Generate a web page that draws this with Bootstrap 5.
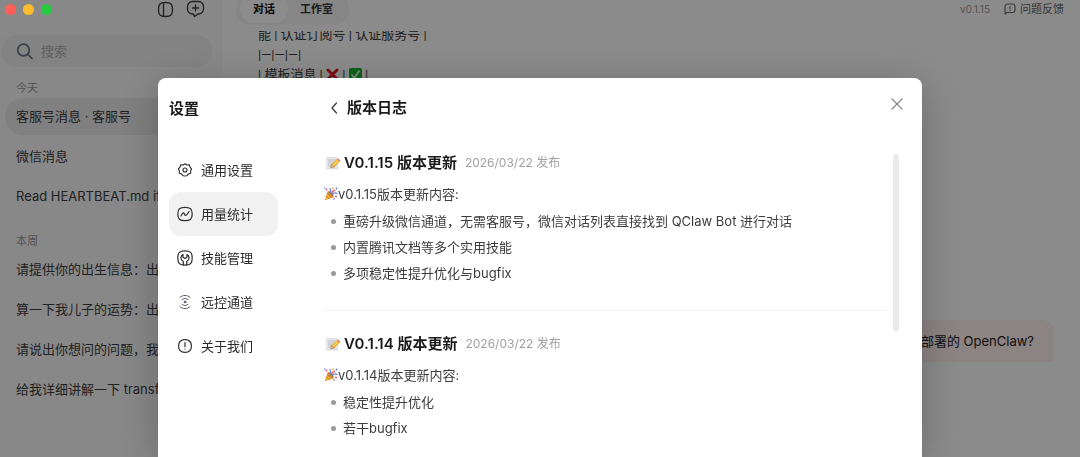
<!DOCTYPE html>
<html lang="zh-CN">
<head>
<meta charset="utf-8">
<meta name="viewport" content="width=device-width, initial-scale=1">
<title>QClaw 设置</title>
<link href="https://cdn.jsdelivr.net/npm/bootstrap@5.3.0/dist/css/bootstrap.min.css" rel="stylesheet">
<style>
  body { font-family: Inter, "Noto Sans CJK SC", sans-serif; font-size: 13px; line-height: 20px; color: #3c3c3c; background: #fdfdfd; }
  svg { display: block; flex: none; fill: none; stroke: currentColor; stroke-linecap: round; stroke-linejoin: round; }
  button { font: inherit; color: inherit; background: none; border: 0; padding: 0; }

  /* window chrome */
  .window-dots { z-index: 1060; top: 4px; left: 5px; gap: 7px; }
  .window-dots button { width: 11px; height: 11px; border-radius: 50%; }
  .dot-close { background: #ff5f57; } .dot-min { background: #febc2e; } .dot-max { background: #28c840; }
  .bar-top { height: 18px; }

  /* conversation list */
  .side { width: 222px; background: #f8f8f8; border-right: 1px solid #f1f1f1; }
  .side .bar-top { padding-right: 16px; }
  .search-box { height: 32px; margin: 17px 8px 11px 1px; padding-left: 15px; border-radius: 16px; background: #eeeeee; color: #667085; gap: 8px; }
  .search-box input { border: 0; background: none; outline: 0; min-width: 0; padding: 0; }
  .search-box input::placeholder { color: #adadad; opacity: 1; }
  .group-label { font-size: 11px; line-height: 20px; font-weight: 400; color: #999; padding-left: 16px; margin: 0; }
  .talks { padding: 0 5px; display: grid; gap: 3px; margin: 0 0 16px; }
  .talks a { display: block; height: 37px; line-height: 37px; padding: 0 11px; border-radius: 18px; color: #3c3c3c; text-decoration: none; }
  .talks a.active { background: #e9e9e9; }

  /* chat area */
  .chat-bar { padding: 0 16px 0 14px; font-size: 11px; }
  .switcher { height: 32px; padding: 2px 4px; border-radius: 16px; background: #f5f5f5; font-weight: 600; color: #333; }
  .switcher button { padding: 0 12px; border-radius: 14px; }
  .switcher .active { background: #fff; color: #111; padding: 0 13px; }
  .ver { font-size: 10px; color: #999; margin-right: 14px; }
  .feedback { color: #666; }
  .transcript { margin-top: 13px; padding: 0 26px 95px 36px; }
  .transcript p { margin-top: -6px; font-family: Roboto, "Noto Sans CJK SC", sans-serif; }
  .transcript .bubble { padding: 11px 20px; border-radius: 12px 12px 3px 12px; background: #ffeeee; color: #222; }
  .inline-icon { display: inline-block; vertical-align: -2px; }
  .cross { stroke: #e5141f; }
  .tick { stroke: #fff; }

  /* settings dialog */
  .modal-backdrop.show { opacity: .45; }
  .modal-dialog { max-width: 764px; height: calc(100vh - 78px); margin: 78px auto 0; }
  .modal-content { height: 100%; border: 0; border-radius: 8px 8px 0 0; overflow: hidden; box-shadow: 0 8px 40px rgba(0,0,0,.25); }
  .pane-title { font-size: 15px; line-height: 20px; font-weight: 600; color: #1a1a1a; margin: 0; }
  .menu-pane { width: 120px; padding: 21px 0 0 11px; }
  .menu-pane nav { margin-top: 29px; }
  .menu-pane .nav-link { height: 44px; padding: 0 8px; gap: 8px; border-radius: 12px; color: #2b2b2b; font-size: 13px; }
  .menu-pane .nav-link.active { background: #f1f1f1; }
  .remote { color: #5c5c6c; }
  .log-pane { padding: 20px 23px 0 46px; }
  .log-head { padding: 0 0 0 6px; gap: 9px; margin-right: -4px; }
  .btn-dismiss { color: #888; }
  .log-scroll { margin-top: 34px; padding-right: 12px; }
  .thumb { top: 2px; right: 0; width: 6px; height: 177px; border-radius: 3px; background: #e9e9e9; }
  .release { padding-bottom: 24px; border-bottom: 1px solid #f2f2f2; margin-bottom: 22px; }
  .release header { height: 22px; gap: 4px; padding-left: 2px; }
  .release time { font-size: 12px; color: #a0a0a0; margin-left: 4px; }
  .release p { margin: 10px 0 4px; }
  .release ul { list-style: none; padding: 0 0 0 7px; margin: 0; }
  .release li { display: flex; align-items: center; gap: 7px; line-height: 26px; }
  .release li::before { content: ""; flex: none; width: 5px; height: 5px; border-radius: 50%; background: #999; }
</style>
</head>
<body class="vh-100 overflow-hidden">

<svg width="0" height="0" class="position-absolute" aria-hidden="true">
  <symbol id="memo" viewBox="0 0 28 28">
    <path d="M2 3h21v23H2z" fill="#e6e7e8" stroke="#c6c8ca"/>
    <path d="M5 8h14M5 12h13M5 16h9M5 20h6" stroke="#a9adb1" stroke-width="1.4"/>
    <path d="M11 18 22 7l5 4-11 11z" fill="#f8bd2f" stroke="#d88b16" stroke-width="1"/>
    <path d="m13 20 11-11" stroke="#ffe07b" stroke-width="2"/>
    <path d="m11 18-2 6 7-2z" fill="#e7b88a" stroke="#8a5b36" stroke-width=".8"/>
    <path d="m22 7 2-2 5 4-2 2z" fill="#e4717a" stroke="none"/>
  </symbol>
  <symbol id="party" viewBox="0 0 28 28">
    <path d="M8 9 2 26l17-6z" fill="#f6bd35" stroke="#d48a1b"/>
    <path d="m7 13 7 8M5 18l5 5" stroke="#c6603c" stroke-width="2"/>
    <ellipse cx="13.500" cy="14.500" rx="3" ry="7.500" transform="rotate(-43 13.500 14.500)" fill="#b9803c" stroke="#e6a22c"/>
    <path d="M12 12c2-3 2-6 0-9M16 15c3-3 7-4 10-2" stroke="#5b7fe0" stroke-width="2.400"/>
    <path d="M15 13c1-4 4-6 7-6" stroke="#e0475b" stroke-width="2.400"/>
    <g stroke="none"><circle cx="5" cy="5" r="1.800" fill="#d94d8b"/><circle cx="18" cy="3" r="1.800" fill="#f0a42b"/><circle cx="25" cy="3" r="1.800" fill="#5b7fe0"/><circle cx="24" cy="19" r="1.800" fill="#e0475b"/><circle cx="1.800" cy="1.800" r="1.500" fill="#5b7fe0"/><circle cx="20" cy="24" r="1.600" fill="#7e57c2"/></g>
  </symbol>
</svg>

<div class="window-dots position-fixed d-flex">
  <button class="dot-close" aria-label="关闭窗口"></button>
  <button class="dot-min" aria-label="最小化"></button>
  <button class="dot-max" aria-label="最大化"></button>
</div>

<div class="d-flex h-100">
  <aside class="side flex-shrink-0 overflow-hidden">
    <div class="bar-top d-flex align-items-center justify-content-end gap-2">
      <button aria-label="收起侧栏" class="me-1"><svg width="17" height="17" viewBox="0 0 17 17" stroke-width="1.300"><path d="M8.500 1.500c5.500 0 7 1.500 7 7s-1.500 7-7 7-7-1.500-7-7 1.500-7 7-7zM6.500 2v13"/></svg></button>
      <button aria-label="新建对话"><svg width="19" height="18" viewBox="0 0 19 18" stroke-width="1.300"><path d="M9.500 1.500h3a5 5 0 0 1 5 5v2.500a5 5 0 0 1-5 5h-.8L8.500 16.500 7.300 14h-.8a5 5 0 0 1-5-5V6.500a5 5 0 0 1 5-5zM9.500 5v6M6.500 8h6"/></svg></button>
    </div>
    <label class="search-box d-flex align-items-center">
      <svg width="17" height="17" viewBox="0 0 17 17" stroke-width="1.700"><circle cx="7.500" cy="7" r="5.800"/><path d="m12 11.500 4 4"/></svg>
      <input type="search" placeholder="搜索" aria-label="搜索">
    </label>
    <h2 class="group-label">今天</h2>
    <nav class="talks">
      <a href="#" class="active text-nowrap">客服号消息 · 客服号</a>
      <a href="#" class="text-nowrap">微信消息</a>
      <a href="#" class="text-truncate">Read HEARTBEAT.md if it exists</a>
    </nav>
    <h2 class="group-label">本周</h2>
    <nav class="talks">
      <a href="#" class="text-truncate">请提供你的出生信息：出生年月</a>
      <a href="#" class="text-truncate">算一下我儿子的运势：出生日期</a>
      <a href="#" class="text-truncate">请说出你想问的问题，我会回答</a>
      <a href="#" class="text-truncate">给我详细讲解一下 transformer</a>
    </nav>
  </aside>

  <main class="flex-grow-1 d-flex flex-column overflow-hidden">
    <div class="chat-bar bar-top d-flex align-items-center justify-content-between">
      <div class="switcher d-flex">
        <button class="active">对话</button>
        <button>工作室</button>
      </div>
      <div class="d-flex align-items-center">
        <span class="ver">v0.1.15</span>
        <button class="feedback d-flex align-items-center gap-1"><svg width="12" height="12" viewBox="0 0 12 12" stroke-width="1.100"><path d="M1 11V3.500A2.500 2.500 0 0 1 3.500 1h5A2.500 2.500 0 0 1 11 3.500v3.500A2.500 2.500 0 0 1 8.500 9.500H3zM6 3.500v2M6 7.400v.1"/></svg>问题反馈</button>
      </div>
    </div>
    <div class="transcript flex-grow-1 d-flex flex-column overflow-hidden">
      <p class="mb-0">能 | 认证订阅号 | 认证服务号 |<br>|—|—|—|<br>| 模板消息 |
        <svg class="inline-icon cross" width="13" height="13" viewBox="0 0 13 13" stroke-width="3" role="img" aria-label="否"><path d="m2 2 9 9m0-9-9 9"/></svg> |
        <svg class="inline-icon tick" width="13" height="13" viewBox="0 0 13 13" stroke-width="1.600" role="img" aria-label="是"><rect width="13" height="13" rx="2" fill="#12b52a" stroke="none"/><path d="m3 7 2.500 3L10 3"/></svg> |</p>
      <div class="bubble mt-auto align-self-end">本地部署的 OpenClaw?</div>
    </div>
  </main>
</div>

<div class="modal-backdrop show"></div>
<div class="modal d-block overflow-hidden" role="dialog" aria-modal="true" aria-labelledby="settings-title">
  <div class="modal-dialog">
    <div class="modal-content flex-row">
      <div class="menu-pane flex-shrink-0">
        <h1 class="pane-title" id="settings-title">设置</h1>
        <nav class="nav flex-column">
          <a class="nav-link d-flex align-items-center" href="#"><svg width="16" height="16" viewBox="0 0 16 16" stroke-width="1.100"><path d="M8 1.700 9.900 3l2.400-.1.700 2.200 1.600 1.700L13.600 9l.1 2.300-2.300.7L9.700 13.800 8 14l-1.700-.2L4.600 12l-2.300-.7.100-2.300-1-2.200L3 5.100l.7-2.200L6.100 3z"/><circle cx="8" cy="8" r="2"/></svg>通用设置</a>
          <a class="nav-link active d-flex align-items-center" href="#" aria-current="page"><svg width="16" height="16" viewBox="0 0 16 16" stroke-width="1.200"><path d="M8 1.400c5.300 0 7.200 1.500 7.200 6.600S13.300 14.600 8 14.600.8 13.100.8 8 2.700 1.400 8 1.400z"/><path d="M4 10c1-2.200 1.800-3.300 2.500-3.100C7.600 7.200 7.500 9.500 8.700 9.400 9.800 9.300 10.600 7.500 12 5.500"/></svg>用量统计</a>
          <a class="nav-link d-flex align-items-center" href="#"><svg width="16" height="16" viewBox="0 0 16 16" stroke-width="1.200"><path d="M8 .8c5.500 0 7.200 1.700 7.200 7.200s-1.700 7.200-7.200 7.200S.8 13.500.8 8 2.500.8 8 .8z"/><path d="M6.300 15v-3.500C4.500 10.500 3.700 9 4 7.300c.2-1.300.9-2.200 2-2.800v2.700l2 1.300 2-1.300V4.500c1.100.6 1.800 1.500 2 2.800.3 1.700-.5 3.200-2.300 4.200V15"/></svg>技能管理</a>
          <a class="nav-link d-flex align-items-center" href="#"><svg class="remote" width="16" height="16" viewBox="0 0 16 16" stroke-width="1"><path d="M3 3.300c3-2.600 7-2.600 10 0M5 5.600c1.800-1.500 4.200-1.500 6 0M3 12.700c3 2.600 7 2.600 10 0M5 10.400c1.800 1.500 4.200 1.500 6 0"/><circle cx="8" cy="8" r=".9" fill="currentColor"/></svg>远控通道</a>
          <a class="nav-link d-flex align-items-center" href="#"><svg width="16" height="16" viewBox="0 0 16 16" stroke-width="1.200"><path d="M8 1.600c4.600 0 6.400 1.800 6.400 6.400S12.600 14.400 8 14.400 1.600 12.600 1.600 8 3.400 1.600 8 1.600zM8 4.700v4M8 11v.1"/></svg>关于我们</a>
        </nav>
      </div>

      <section class="log-pane flex-grow-1 d-flex flex-column">
        <div class="d-flex align-items-center log-head">
          <button aria-label="返回"><svg width="8" height="12" viewBox="0 0 8 12" stroke-width="1.300"><path d="M6.500 1 2 6l4.500 5"/></svg></button>
          <h2 class="pane-title">版本日志</h2>
          <button class="btn-dismiss ms-auto" aria-label="关闭"><svg width="12" height="20" viewBox="0 0 12 20" stroke-width="1.200"><path d="m1 1 10 10M11 1 1 11"/></svg></button>
        </div>

        <div class="log-scroll position-relative flex-grow-1">
          <div class="thumb position-absolute"></div>
          <article class="release">
            <header class="d-flex align-items-center"><svg width="14" height="14"><use href="#memo"/></svg><h3 class="pane-title">V0.1.15 版本更新</h3><time datetime="2026-03-22">2026/03/22 发布</time></header>
            <p class="d-flex align-items-center"><svg width="14" height="14"><use href="#party"/></svg>v0.1.15版本更新内容:</p>
            <ul>
              <li>重磅升级微信通道，无需客服号，微信对话列表直接找到 QClaw Bot 进行对话</li>
              <li>内置腾讯文档等多个实用技能</li>
              <li>多项稳定性提升优化与bugfix</li>
            </ul>
          </article>
          <article class="release border-0">
            <header class="d-flex align-items-center"><svg width="14" height="14"><use href="#memo"/></svg><h3 class="pane-title">V0.1.14 版本更新</h3><time datetime="2026-03-22">2026/03/22 发布</time></header>
            <p class="d-flex align-items-center"><svg width="14" height="14"><use href="#party"/></svg>v0.1.14版本更新内容:</p>
            <ul>
              <li>稳定性提升优化</li>
              <li>若干bugfix</li>
            </ul>
          </article>
        </div>
      </section>
    </div>
  </div>
</div>

<script src="https://cdn.jsdelivr.net/npm/bootstrap@5.3.0/dist/js/bootstrap.bundle.min.js"></script>
</body>
</html>
